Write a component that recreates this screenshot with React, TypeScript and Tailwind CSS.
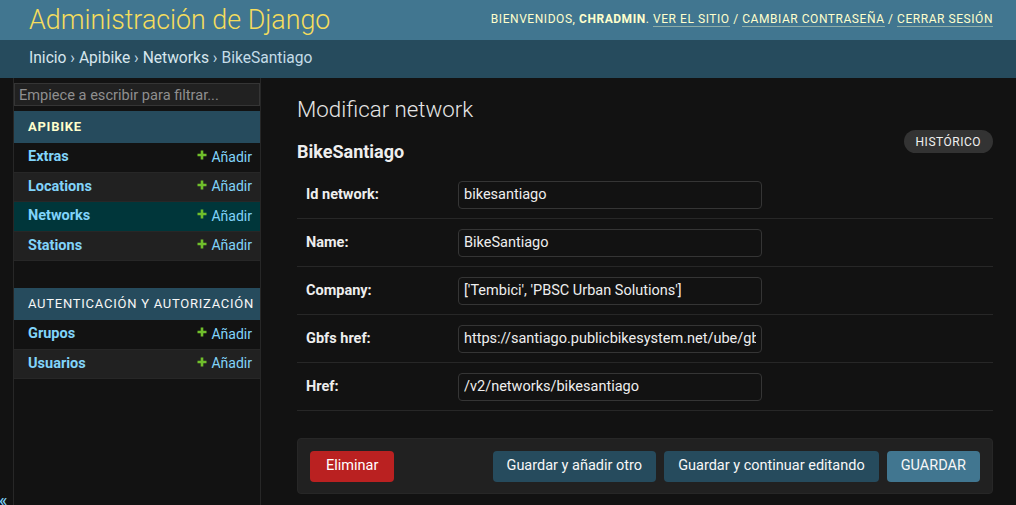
import React from 'react'

type Model = { name: string; current?: boolean }

const apps: { name: string; current?: boolean; models: Model[] }[] = [
  {
    name: 'Apibike',
    current: true,
    models: [{ name: 'Extras' }, { name: 'Locations' }, { name: 'Networks', current: true }, { name: 'Stations' }],
  },
  {
    name: 'Autenticación y autorización',
    models: [{ name: 'Grupos' }, { name: 'Usuarios' }],
  },
]

const fields = [
  { label: 'Id network:', value: 'bikesantiago' },
  { label: 'Name:', value: 'BikeSantiago' },
  { label: 'Company:', value: "['Tembici', 'PBSC Urban Solutions']" },
  { label: 'Gbfs href:', value: 'https://santiago.publicbikesystem.net/ube/gbfs/v1/' },
  { label: 'Href:', value: '/v2/networks/bikesantiago' },
]

function AddIcon() {
  return (
    <svg width="10" height="10" viewBox="0 0 10 10" className="mb-[4px] mr-[4px]">
      <path d="M5 0.5v9M0.5 5h9" stroke="#70bf2b" strokeWidth="2.6" />
    </svg>
  )
}

function Sidebar() {
  return (
    <nav className="w-[247px] shrink-0 border-r border-[#272727] flex flex-col">
      <input
        type="text"
        placeholder="Empiece a escribir para filtrar..."
        className="mt-[5px] h-[23px] w-full px-[4px] bg-[#212121] border border-[#353535] text-[14.6px] text-[#eeeeee] placeholder-[#8f8f8f] outline-none"
      />
      {apps.map((app, i) => (
        <div key={app.name} className={i === 0 ? 'mt-[5px]' : 'mt-[27px]'}>
          <div
            className={`h-[32px] bg-[#264b5d] pl-[14px] flex items-center text-[13px] uppercase tracking-[0.75px] ${
              app.current ? 'font-bold text-[#ffffcc]' : 'text-[#f7f7f7]'
            }`}
          >
            {app.name}
          </div>
          {app.models.map((m, j) => (
            <div
              key={m.name}
              className={`h-[29.5px] border-b border-[#272727] pl-[14px] pr-[8px] flex items-center justify-between ${
                m.current ? 'bg-[#00363a]' : j % 2 === 0 ? 'bg-[#121212]' : 'bg-[#212121]'
              }`}
            >
              <span className="text-[14.5px] font-bold text-[#81d4fa]">{m.name}</span>
              <span className="flex items-center text-[14px] text-[#81d4fa]">
                <AddIcon />
                Añadir
              </span>
            </div>
          ))}
        </div>
      ))}
    </nav>
  )
}

export default function App() {
  return (
    <div className="h-screen flex flex-col bg-[#121212] font-['Roboto',sans-serif] text-[#eeeeee] overflow-hidden">
      <header className="h-[40px] shrink-0 bg-[#417690] flex items-center justify-between pl-[29px] pr-[23px]">
        <div className="text-[26.8px] font-light text-[#f5dd5d] leading-none">Administración de Django</div>
        <div className="text-[12px] tracking-[0.55px] uppercase text-[#ffffcc] mb-[2px]">
          Bienvenidos, <strong className="font-bold">chradmin</strong>.{' '}
          <a className="border-b border-[#ffffcc]/40">Ver el sitio</a> /{' '}
          <a className="border-b border-[#ffffcc]/40">Cambiar contraseña</a> /{' '}
          <a className="border-b border-[#ffffcc]/40">Cerrar sesión</a>
        </div>
      </header>

      <div className="h-[38px] shrink-0 bg-[#264b5d] pl-[29px] flex items-center text-[15.6px] text-[#c4dce8]">
        <span>
          <a className="text-[#d6e6ee]">Inicio</a> › <a className="text-[#d6e6ee]">Apibike</a> ›{' '}
          <a className="text-[#d6e6ee]">Networks</a> › BikeSantiago
        </span>
      </div>

      <div className="flex-1 flex min-h-0">
        <div className="w-[14px] shrink-0 border-r border-[#272727] flex flex-col justify-end">
          <span className="text-[18px] leading-none text-[#81d4fa] mb-[-4px] -ml-[1px]">«</span>
        </div>

        <Sidebar />

        <main className="flex-1 pl-[36px] pr-[23px] pt-[18px]">
          <h1 className="text-[22.3px] font-light leading-[26px] text-[#e6e6e6]">Modificar network</h1>

          <div className="mt-[8px] flex items-start justify-between">
            <h2 className="pt-[12px] text-[18px] font-bold leading-[20px] text-[#eeeeee]">BikeSantiago</h2>
            <a className="h-[23px] px-[12px] rounded-full bg-[#333333] flex items-center text-[12px] uppercase tracking-[0.5px] text-[#f0f0f0]">
              Histórico
            </a>
          </div>

          <div className="mt-[9px]">
            {fields.map((f) => (
              <div key={f.label} className="h-[48px] border-b border-[#272727] pl-[9px] flex items-center">
                <label className="w-[152px] text-[14.5px] font-bold text-[#eeeeee]">{f.label}</label>
                <input
                  readOnly
                  value={f.value}
                  className="w-[304px] h-[28px] px-[5px] bg-[#121212] border border-[#353535] rounded-[4px] text-[14.5px] text-[#eeeeee] outline-none"
                />
              </div>
            ))}
          </div>

          <div className="mt-[27px] h-[56px] bg-[#212121] border border-[#272727] rounded-[4px] px-[12px] flex items-center justify-between">
            <a className="h-[31px] px-[16px] rounded-[4px] bg-[#ba2121] flex items-center text-[14.5px] text-white">Eliminar</a>
            <div className="flex gap-[7.5px]">
              <button className="h-[31px] px-[14px] rounded-[4px] bg-[#264b5d] text-[14.5px] text-[#f7f7f7]">
                Guardar y añadir otro
              </button>
              <button className="h-[31px] px-[14.5px] rounded-[4px] bg-[#264b5d] text-[14.5px] text-[#f7f7f7]">
                Guardar y continuar editando
              </button>
              <button className="h-[31px] px-[14px] rounded-[4px] bg-[#417690] text-[14.5px] text-[#f7f7f7] uppercase">
                Guardar
              </button>
            </div>
          </div>
        </main>
      </div>
    </div>
  )
}
